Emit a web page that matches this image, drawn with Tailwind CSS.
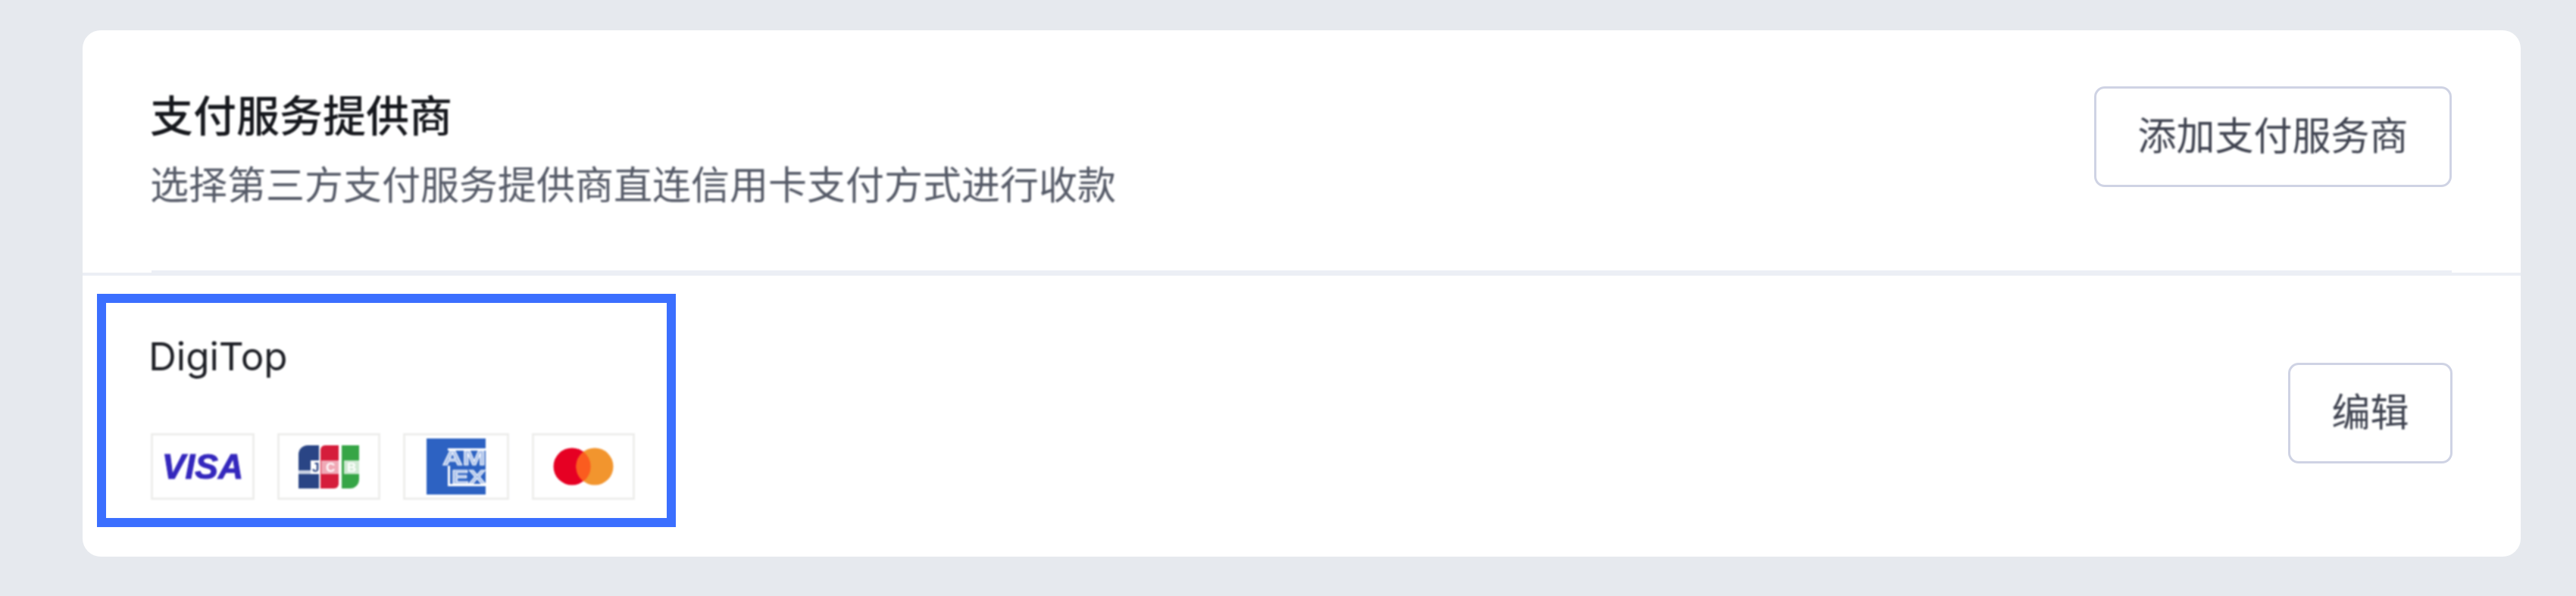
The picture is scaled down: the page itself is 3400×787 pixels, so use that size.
<!DOCTYPE html>
<html lang="zh">
<head>
<meta charset="utf-8">
<title>支付服务提供商</title>
<script src="https://cdn.jsdelivr.net/npm/@tailwindcss/browser@4"></script>
</head>
<body class="m-0 h-[787px] w-[3400px] overflow-hidden bg-[#e6e9ee] font-['Inter','Noto_Sans_CJK_SC',sans-serif]">
<div class="pt-[40px] pl-[109px]">
  <section class="relative flex h-[695px] w-[3218px] flex-col rounded-[24px] bg-white">
    <div class="h-[324px] border-b-[4px] border-[#eceff5]">
      <div class="mx-[91px] -mb-[4px] flex h-[324px] items-start justify-between border-b-[7px] border-[#eceff5] pt-[74px]">
        <div class="-ml-[2px] blur-[1px]">
          <h2 class="m-0 text-[57px] leading-[80px] font-medium text-[#16181d]">支付服务提供商</h2>
          <p class="m-0 mt-[16px] text-[51px] leading-[70px] text-[#565b68]">选择第三方支付服务提供商直连信用卡支付方式进行收款</p>
        </div>
        <button class="flex h-[133px] w-[472px] items-center justify-center rounded-[14px] border-[3px] border-[#cfd3e4] bg-white text-[51px] text-[#3f4350]"><span class="blur-[0.8px]">添加支付服务商</span></button>
      </div>
    </div>
    <div class="flex flex-1 items-start justify-between pr-[90px] pl-[90px]">
      <div class="pt-[72px]">
        <div class="-ml-[3px] text-[51px] leading-[70px] text-[#1d1f25] blur-[1px]">DigiTop</div>
        <div class="mt-[66px] flex items-center blur-[1px]">
          <div class="flex h-[88px] w-[137px] items-center justify-center border-[3px] border-[#eeeeec]">
            <span class="text-[46px] leading-none font-bold text-[#3427bd] italic font-['Liberation_Sans',sans-serif] [-webkit-text-stroke:1px_#3427bd]">VISA</span>
          </div>
          <div class="ml-[30px] flex h-[88px] w-[136px] items-center justify-center border-[3px] border-[#eeeeec]">
            <svg width="80" height="57" viewBox="0 0 80 57">
              <path d="M0 12a12 12 0 0 1 12-12h15v57H0z" fill="#2a4585"/>
              <path d="M29 6a6 6 0 0 1 6-6h18v51a6 6 0 0 1-6 6H29z" fill="#d51d3b"/>
              <path d="M57 0h23v45a12 12 0 0 1-12 12H57z" fill="#36a546"/>
              <rect x="0" y="33" width="27" height="5" fill="#c9d2e3"/>
              <rect x="16" y="20" width="11" height="18" fill="#fff"/>
              <rect x="30" y="20" width="23" height="18" fill="#f0a9b6"/>
              <rect x="60" y="20" width="20" height="18" fill="#cfe9d3"/>
              <text x="18" y="35" font-size="17" font-weight="700" fill="#2a4585" font-family="Liberation Sans">J</text>
              <text x="36" y="35" font-size="17" font-weight="700" fill="#fff" font-family="Liberation Sans">C</text>
              <text x="64" y="35" font-size="17" font-weight="700" fill="#fff" font-family="Liberation Sans">B</text>
            </svg>
          </div>
          <div class="ml-[30px] flex h-[88px] w-[140px] items-center justify-center border-[3px] border-[#eeeeec]">
            <svg width="78" height="74" viewBox="0 0 78 74">
              <rect width="78" height="74" fill="#2d62c2"/>
              <rect x="28" y="13" width="50" height="3" fill="#fff"/>
              <rect x="28" y="60" width="50" height="3" fill="#fff"/>
              <rect x="28" y="36" width="3" height="26" fill="#fff"/>
              <text x="21" y="35" font-size="28" font-weight="700" fill="#a9c0ea" stroke="#fff" stroke-width="1" font-family="Liberation Sans" textLength="57" lengthAdjust="spacingAndGlyphs">AM</text>
              <text x="33" y="60" font-size="25" font-weight="700" fill="#a9c0ea" stroke="#fff" stroke-width="1" font-family="Liberation Sans" textLength="45" lengthAdjust="spacingAndGlyphs">EX</text>
            </svg>
          </div>
          <div class="ml-[30px] flex h-[88px] w-[136px] items-center justify-center border-[3px] border-[#eeeeec]">
            <svg width="80" height="50" viewBox="0 0 80 50">
              <circle cx="25" cy="25" r="24.5" fill="#e60023"/>
              <circle cx="55" cy="25" r="24.5" fill="#f2952e"/>
              <path d="M40 5.5a24.5 24.5 0 0 1 0 39a24.5 24.5 0 0 1 0-39z" fill="#fb5c1f"/>
            </svg>
          </div>
        </div>
      </div>
      <button class="mt-[115px] flex h-[133px] w-[217px] items-center justify-center rounded-[14px] border-[3px] border-[#cfd3e4] bg-white text-[51px] text-[#3f4350]"><span class="blur-[0.8px]">编辑</span></button>
    </div>
    <div class="absolute top-[348px] left-[19px] h-[308px] w-[764px] border-[12px] border-[#3b6fff]"></div>
  </section>
</div>
</body>
</html>
